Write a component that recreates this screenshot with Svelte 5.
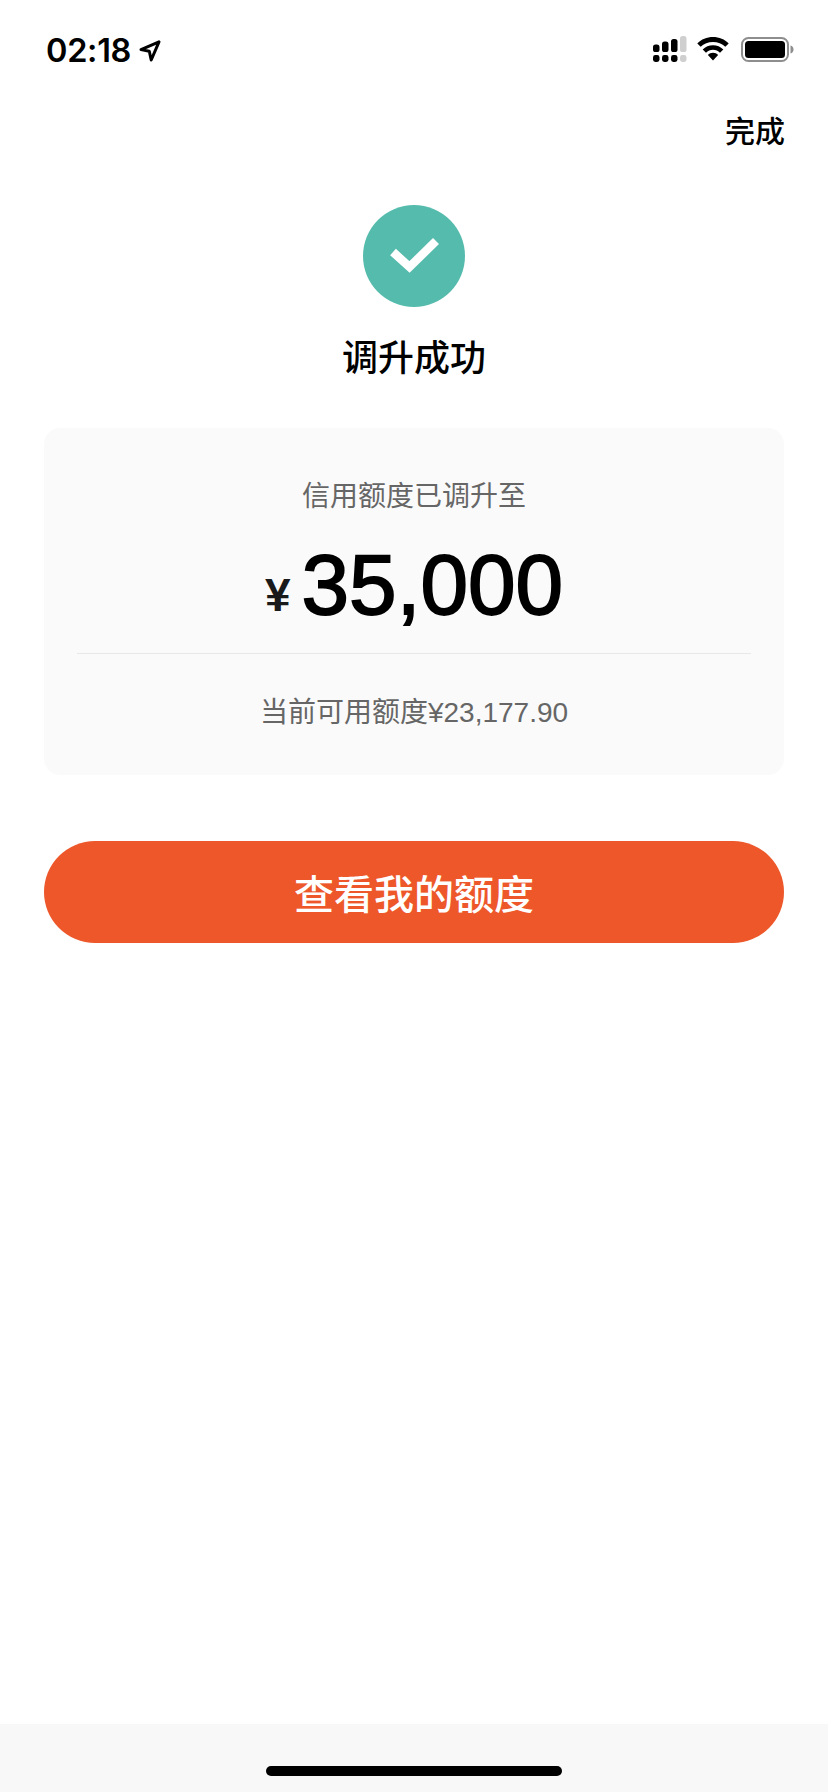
<script>
  const signalCols = [
    { x: 653, top: 43.5, on: true },
    { x: 662, top: 40.5, on: true },
    { x: 671, top: 38, on: true },
    { x: 680, top: 35, on: false }
  ];
</script>

<div class="page">
  <header class="status">
    <div class="time-wrap">
      <span class="time">02:18</span>
      <svg class="loc" width="22" height="22" viewBox="0 0 22 22" aria-hidden="true">
        <path d="M20 1.800 2 9.600 10.300 11.200 12.200 20Z" fill="none" stroke="#000" stroke-width="3" stroke-linejoin="round"/>
      </svg>
    </div>
    <div class="indicators">
      <svg class="signal" width="34" height="27" viewBox="653 35 34 27" aria-hidden="true">
        {#each signalCols as c}
          <rect x={c.x} y={c.top} width="6.500" height={51 - c.top} rx="2.600" fill={c.on ? '#000' : '#cfcfcf'}/>
          <rect x={c.x} y="54" width="6.500" height="7" rx="2.400" fill={c.on ? '#000' : '#cfcfcf'}/>
        {/each}
      </svg>
      <svg class="wifi" width="32" height="24" viewBox="0 0 32 24" aria-hidden="true">
        <path d="M16 0C9.800 0 4.300 2.400.3 6.400l3.400 3.400C6.800 6.700 11.200 4.900 16 4.900s9.200 1.800 12.300 4.900l3.400-3.400C27.700 2.400 22.200 0 16 0Z"/>
        <path d="M16 8.200c-3.900 0-7.600 1.500-10.300 4.200l3.300 3.300c1.800-1.800 4.300-2.900 7-2.900s5.200 1.100 7 2.900l3.300-3.300c-2.700-2.700-6.400-4.200-10.300-4.200Z"/>
        <path d="M16 15.800c-2 0-3.800.8-5.100 2.100L16 23.500l5.100-5.600c-1.300-1.300-3.100-2.100-5.100-2.100Z"/>
      </svg>
      <svg width="53" height="25" viewBox="0 0 53 25" aria-hidden="true">
        <rect x="1" y="1" width="46" height="23" rx="6.500" fill="none" stroke="#8e8e8e" stroke-width="2"/>
        <rect x="4" y="4" width="40" height="17" rx="3.500" fill="#000"/>
        <path d="M49.500 8.500c2 .4 3 2 3 4s-1 3.600-3 4Z" fill="#8e8e8e"/>
      </svg>
    </div>
  </header>

  <div class="nav"><span class="done">完成</span></div>

  <section class="result">
    <svg class="check" width="102" height="102" viewBox="0 0 102 102" aria-hidden="true">
      <circle cx="51" cy="51" r="51" fill="#55bbad"/>
      <path d="M30 47 46.500 62 73 36" fill="none" stroke="#fff" stroke-width="8.500"/>
    </svg>
    <h1>调升成功</h1>
  </section>

  <section class="card">
    <p class="label">信用额度已调升至</p>
    <div class="amount"><span class="yen">¥</span><span class="num">35,000</span></div>
    <div class="rule"></div>
    <p class="avail">当前可用额度¥23,177.90</p>
  </section>

  <button class="cta" type="button">查看我的额度</button>

  <div class="spacer"></div>

  <footer class="home"><div class="bar"></div></footer>
</div>

<style>
  :global(body) {
    margin: 0;
    background: #fff;
  }
  .page {
    width: 828px;
    height: 1792px;
    display: flex;
    flex-direction: column;
    font-family: "Liberation Sans", "Noto Sans CJK SC", sans-serif;
    color: #000;
    overflow: hidden;
  }
  .status {
    height: 88px;
    flex: none;
    box-sizing: border-box;
    padding: 34px 34px 0 46px;
    display: flex;
    justify-content: space-between;
    align-items: flex-start;
  }
  .time-wrap {
    display: flex;
    align-items: center;
    gap: 8px;
    height: 34px;
  }
  .time {
    font-family: Inter, "Liberation Sans", sans-serif;
    font-size: 32.500px;
    font-weight: 600;
    line-height: 34px;
    letter-spacing: -0.3px;
  }
  .indicators {
    display: flex;
    align-items: center;
    gap: 12px;
    height: 30px;
  }
  .signal {
    margin-right: -2px;
  }
  .nav {
    flex: none;
    box-sizing: border-box;
    height: 66px;
    padding: 27px 43px 0 0;
    display: flex;
    justify-content: flex-end;
    align-items: flex-start;
  }
  .done {
    font-size: 30px;
    font-weight: 500;
    line-height: 34px;
  }
  .result {
    flex: none;
    margin-top: 51px;
    display: flex;
    flex-direction: column;
    align-items: center;
  }
  .check {
    display: block;
  }
  h1 {
    margin: 26px 0 0;
    font-size: 36px;
    font-weight: 500;
    line-height: 52px;
  }
  .card {
    flex: none;
    box-sizing: border-box;
    width: 740px;
    height: 347px;
    margin: 43px 0 0 44px;
    padding: 0 33px;
    background: #fafafa;
    border-radius: 16px;
    display: flex;
    flex-direction: column;
    align-items: center;
  }
  .label {
    margin: 49px 0 0;
    font-size: 28px;
    line-height: 40px;
    color: #666;
  }
  .amount {
    margin-top: 23px;
    height: 90px;
    line-height: 90px;
    white-space: nowrap;
  }
  .yen {
    font-size: 46px;
    font-weight: 700;
    color: #1a1a1a;
    vertical-align: 3px;
  }
  .num {
    margin-left: 11px;
    font-size: 85.500px;
    -webkit-text-stroke: 1.800px #000;
  }
  .rule {
    align-self: stretch;
    height: 1px;
    margin-top: 23px;
    background: #e8e8e8;
  }
  .avail {
    margin: 39px 0 0;
    font-size: 28px;
    line-height: 40px;
    color: #666;
  }
  .cta {
    flex: none;
    width: 740px;
    height: 102px;
    margin: 66px 0 0 44px;
    border: 0;
    padding: 0;
    border-radius: 51px;
    background: #ed572a;
    color: #fff;
    font-family: inherit;
    font-size: 40px;
    font-weight: 500;
  }
  .spacer {
    flex: 1;
  }
  .home {
    flex: none;
    height: 68px;
    background: #f8f8f8;
    display: flex;
    justify-content: center;
    padding-top: 42px;
    box-sizing: border-box;
  }
  .bar {
    width: 296px;
    height: 10px;
    border-radius: 5px;
    background: #000;
  }
</style>
